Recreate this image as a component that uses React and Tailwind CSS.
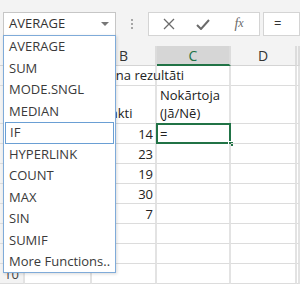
import React from 'react'

const font = { fontFamily: '"Open Sans", "Liberation Sans", sans-serif' }

const items = ['AVERAGE', 'SUM', 'MODE.SNGL', 'MEDIAN', 'IF', 'HYPERLINK', 'COUNT', 'MAX', 'SIN', 'SUMIF', 'More Functions..']

const cols = ['', '', 'B', 'C', 'D', '']
const rows = [
  { n: 1, h: 'h-[20px]' },
  { n: 2, h: 'h-[38px]' },
  { n: 3, h: 'h-[20px]', b: '14' },
  { n: 4, h: 'h-[20px]', b: '23' },
  { n: 5, h: 'h-[20px]', b: '19' },
  { n: 6, h: 'h-[20px]', b: '30' },
  { n: 7, h: 'h-[20px]', b: '7' },
  { n: 8, h: 'h-[20px]' },
  { n: 9, h: 'h-[20px]' },
  { n: 10, h: 'h-[20px]' },
]

const Cell = ({ className = '', children }) => (
  <div className={`border-r-2 border-b border-r-[#e3e3e3] border-b-[#dcdcdc] relative ${className}`}>{children}</div>
)

export default function App() {
  return (
    <div className="w-[300px] h-[284px] overflow-hidden bg-white relative text-[#222]" style={font}>
      {/* formula bar */}
      <div className="h-[46px] bg-[#f3f3f3] flex items-start pt-[12px]">
        <div className="ml-[3px] w-[113px] h-[24px] bg-white border border-[#c6c6c6] flex items-center pl-[5px] pr-[6px] text-[13px] text-[#333]">
          <span className="flex-1">AVERAGE</span>
          <svg width="8" height="5" viewBox="0 0 8 5"><path d="M0 0h8L4 4z" fill="#777" /></svg>
        </div>
        <div className="w-[32px] h-[24px] flex flex-col items-center justify-center gap-[2px]">
          <span className="w-[2px] h-[2px] bg-[#a6a6a6]" />
          <span className="w-[2px] h-[2px] bg-[#a6a6a6]" />
          <span className="w-[2px] h-[2px] bg-[#a6a6a6]" />
        </div>
        <div className="w-[112px] h-[24px] bg-white border border-[#d4d4d4] flex items-center">
          <div className="w-[36px] flex justify-center pl-[4px]">
            <svg width="12" height="12" viewBox="0 0 12 12"><path d="M1 1l10 10M11 1L1 11" stroke="#6b6b6b" strokeWidth="1.3" /></svg>
          </div>
          <div className="w-[36px] flex justify-center">
            <svg width="14" height="11" viewBox="0 0 14 11"><path d="M1 6l4 4 8-9" stroke="#6b6b6b" strokeWidth="2" fill="none" /></svg>
          </div>
          <div className="w-[36px] flex justify-center text-[14px] italic text-[#6b6b6b] leading-none" style={{ fontFamily: '"Liberation Serif", serif' }}>
            f<span className="text-[12px]">x</span>
          </div>
        </div>
        <div className="ml-[3px] flex-1 h-[24px] bg-white border border-[#d4d4d4] flex items-center pl-[10px] text-[13px] text-[#333]">
          =
        </div>
      </div>

      {/* sheet */}
      <div className="grid grid-cols-[25px_67px_65px_74px_66px_1fr]">
        {cols.map((c, i) => (
          <div
            key={i}
            className={`h-[20px] flex items-center justify-center text-[14px] border-r-2 border-r-[#dcdcdc] ${
              c === 'C' ? 'bg-[#d6d6d6] text-[#217346] border-b-2 border-b-[#217346]' : 'bg-[#f3f3f3] text-[#333] border-b border-b-[#d4d4d4]'
            }`}
          >
            {c}
          </div>
        ))}
        {rows.map((r) => (
          <React.Fragment key={r.n}>
            <Cell className={`${r.h} bg-[#f3f3f3] flex items-end justify-center text-[13px] leading-[18px] text-[#444]`}>{r.n}</Cell>
            <Cell className={r.h}>
              {r.n === 1 && (
                <span className="absolute left-[44px] top-0 h-full flex items-center text-[13px] whitespace-nowrap z-10">Eksāmena rezultāti</span>
              )}
            </Cell>
            <Cell className={`${r.h} flex items-end justify-end px-[2px] text-[13px]`}>
              {r.n === 2 ? <span className="w-full text-left leading-[18px] pb-[1px]">Punkti</span> : r.b && <span className="leading-[18px]">{r.b}</span>}
            </Cell>
            <Cell className={`${r.h} flex items-end px-[3px] text-[13px]`}>
              {r.n === 2 && <span className="leading-[18px] pb-[1px]">Nokārtoja<br />(Jā/Nē)</span>}
              {r.n === 3 && (
                <>
                  <span className="leading-[18px]">=</span>
                  <div className="absolute left-[-1px] top-[-1px] right-[-2px] bottom-[-1px] border-2 border-[#217346]" />
                  <div className="absolute right-[-5px] bottom-[-4px] w-[6px] h-[6px] bg-[#217346] border border-white" />
                </>
              )}
            </Cell>
            <Cell className={r.h} />
            <Cell className={r.h} />
          </React.Fragment>
        ))}
      </div>

      {/* function dropdown */}
      <div className="absolute left-[3px] top-[35px] w-[113px] h-[238px] overflow-hidden bg-white border border-[#7fabd9] shadow-[1px_1px_3px_rgba(0,0,0,0.15)] z-20 flex flex-col">
        {items.map((it) => (
          <div
            key={it}
            className={`h-[21.5px] shrink-0 flex items-center text-[13px] text-[#3a3a3a] ${
              it === 'IF' ? 'mx-[1px] pl-[4px] border border-[#6a9fd4]' : 'pl-[5px]'
            }`}
          >
            {it}
          </div>
        ))}
      </div>
    </div>
  )
}
